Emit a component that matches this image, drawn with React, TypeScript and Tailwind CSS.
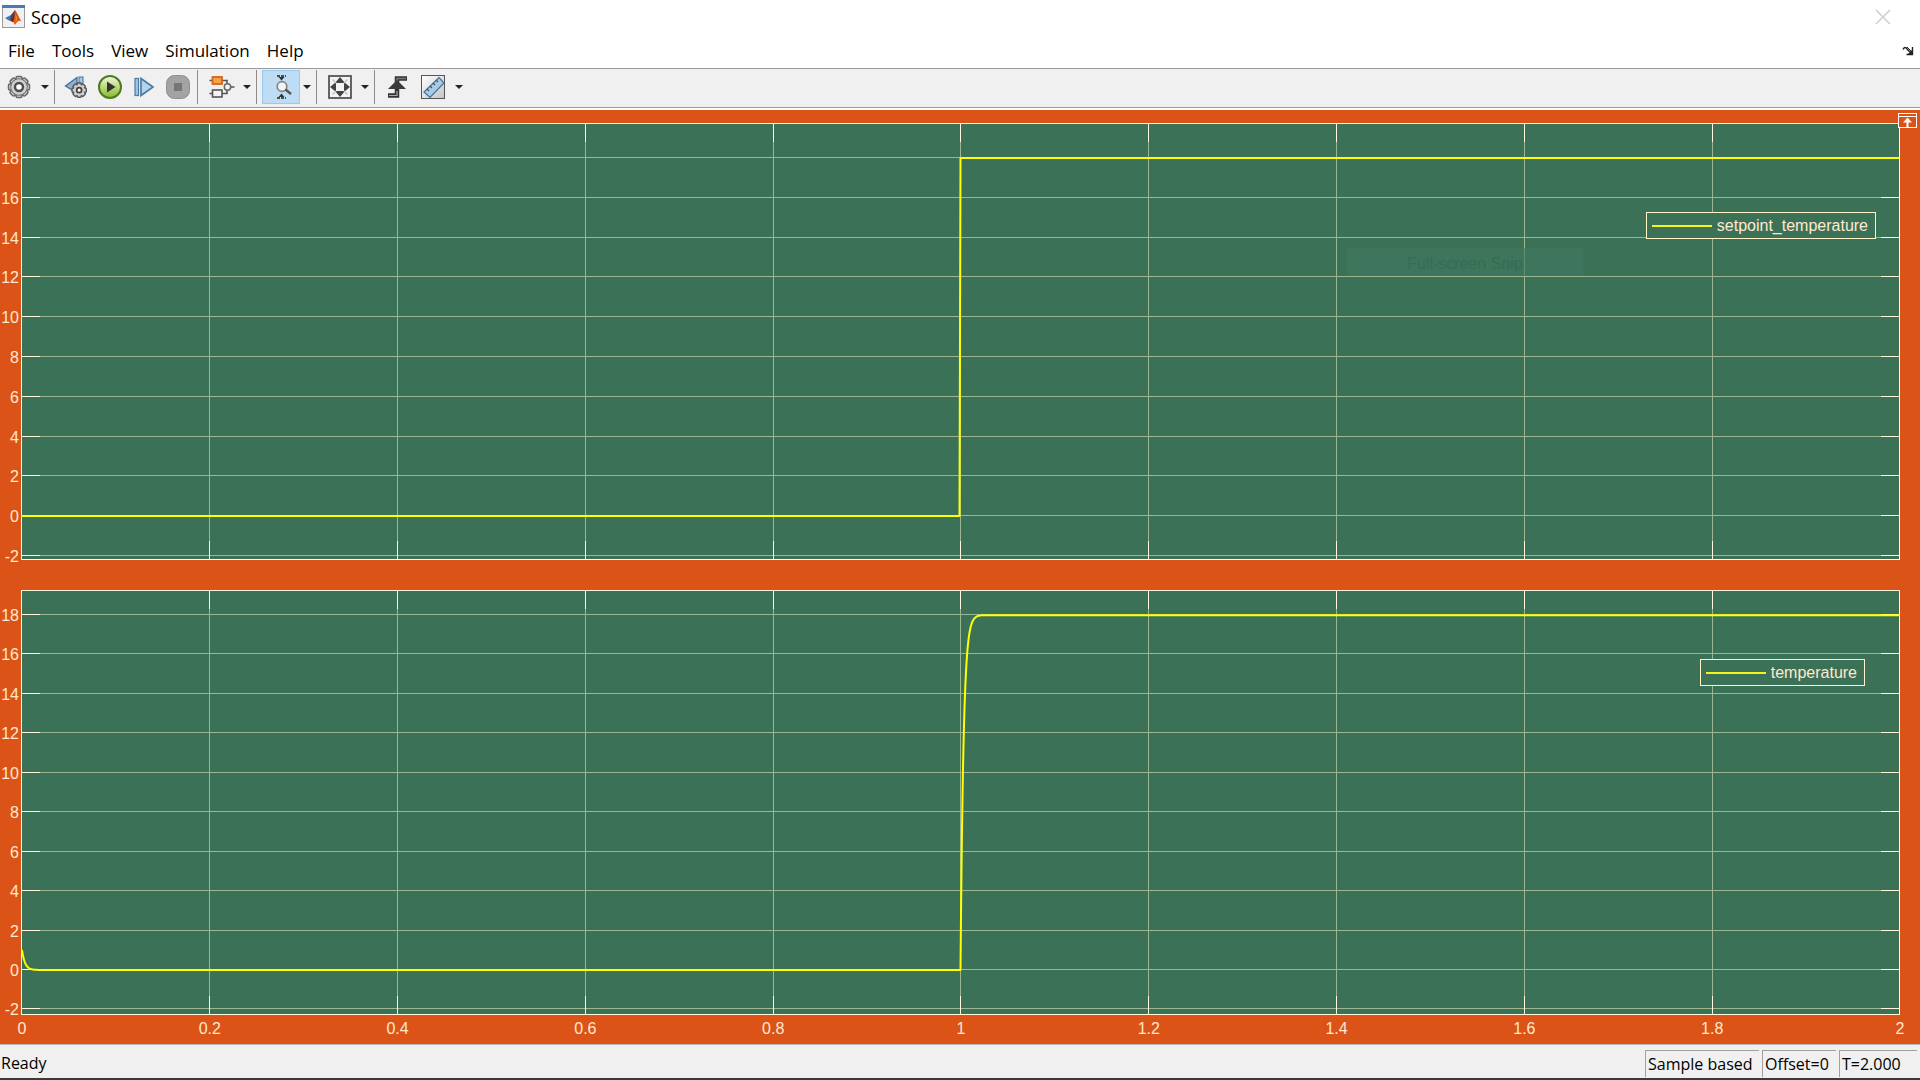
import React from "react";

const SIGNAL = "#ffff00";

/* ---------- icons ---------- */

function MatlabIcon() {
  return (
    <svg width="24" height="24" viewBox="0 0 24 24" aria-hidden="true">
      <rect x="0.5" y="0.5" width="22" height="22" fill="#f0f0f0" stroke="#9a9a9a" />
      <rect x="0" y="0" width="23" height="3" fill="#4a7ab0" />
      <path d="M3 13 L9 10 L12 12 L8 16 L6 15 Z" fill="#3f78b8" />
      <path d="M9 10 L13 5 L12 12 L8 16 Z" fill="#274a78" />
      <path d="M13 5 C15 7 17 13 20 17 C18 15 16 15 13 20 C12 17 10 16 8 16 C11 14 12 8 13 5 Z" fill="#d8541c" />
      <path d="M13 5 C12.500 9 12.500 13 11 17 C10 16 9 16 8 16 C11 14 12 8 13 5 Z" fill="#7c1f10" />
      <path d="M13.500 9 C15 12 15 15 13.500 18 C14 15 14 12 13.500 9 Z" fill="#f6b13c" />
    </svg>
  );
}

const GEAR_TEETH = [0, 45, 90, 135, 180, 225, 270, 315];

function GearIcon() {
  return (
    <svg width="24" height="24" viewBox="0 0 24 24" aria-hidden="true">
      <g fill="#d4d4d4" stroke="#666" strokeWidth="1.500">
        {GEAR_TEETH.map((a) => (
          <rect key={a} x="9" y="1.500" width="6" height="6" rx="1.500" transform={`rotate(${a} 12 12)`} />
        ))}
        <circle cx="12" cy="12" r="8" />
      </g>
      <circle cx="12" cy="12" r="7.800" fill="#d0d0d0" />
      <circle cx="12" cy="12" r="4" fill="#fff" stroke="#4c4c4c" strokeWidth="2.400" />
    </svg>
  );
}

function StepBackIcon() {
  return (
    <svg width="24" height="24" viewBox="0 0 24 24" aria-hidden="true">
      <path d="M13 2.500 V18 L1.500 11 Z" fill="#8fb0cf" stroke="#46709a" strokeWidth="1.300" />
      <rect x="15" y="2" width="4" height="14" fill="#a9c6e0" stroke="#46709a" />
      <g transform="translate(7 7) scale(0.68)" fill="#cfcfcf" stroke="#555" strokeWidth="2">
        {GEAR_TEETH.map((a) => (
          <rect key={a} x="9" y="1.500" width="6" height="6" rx="1" transform={`rotate(${a} 12 12)`} />
        ))}
        <circle cx="12" cy="12" r="8" stroke="none" />
        <circle cx="12" cy="12" r="3.600" fill="#fff" stroke="#444" strokeWidth="2.600" />
      </g>
    </svg>
  );
}

function RunIcon() {
  return (
    <svg width="26" height="26" viewBox="0 0 26 26" aria-hidden="true">
      <defs>
        <linearGradient id="run" x1="0" y1="0" x2="0" y2="1">
          <stop offset="0" stopColor="#f3f9e4" />
          <stop offset="0.550" stopColor="#b5d773" />
          <stop offset="1" stopColor="#86b933" />
        </linearGradient>
      </defs>
      <circle cx="13" cy="13" r="11" fill="url(#run)" stroke="#4d7a1e" strokeWidth="2" />
      <path d="M10 7.500 L18.500 13 L10 18.500 Z" fill="#333" />
    </svg>
  );
}

function StepForwardIcon() {
  return (
    <svg width="22" height="22" viewBox="0 0 22 22" aria-hidden="true">
      <rect x="2" y="2.500" width="3.500" height="17" fill="#a5c6e0" stroke="#4f7ba3" strokeWidth="1.200" />
      <path d="M8 2.500 V19.500 L20 11 Z" fill="#b5d3ea" stroke="#4f7ba3" strokeWidth="1.700" />
    </svg>
  );
}

function StopIcon() {
  return (
    <svg width="24" height="24" viewBox="0 0 24 24" aria-hidden="true">
      <rect x="0.500" y="0.500" width="23" height="23" rx="8" fill="#a3a3a3" stroke="#8e8e8e" />
      <rect x="8" y="8" width="8" height="8" fill="#767676" />
    </svg>
  );
}

function ModelIcon() {
  return (
    <svg width="26" height="24" viewBox="0 0 26 24" aria-hidden="true">
      <path
        d="M13 5.500 H18 V9 M13 18.500 H18 V15 M22 12 H25.500 M0.500 5.500 H3 M0.500 18.500 H3"
        fill="none"
        stroke="#555"
        strokeWidth="1.600"
      />
      <rect x="3.500" y="2" width="9.500" height="7" fill="#f6a24a" stroke="#d0681a" strokeWidth="1.800" />
      <rect x="3.500" y="15" width="9.500" height="7" fill="#f4f4f4" stroke="#555" strokeWidth="1.600" />
      <circle cx="18.500" cy="12" r="3.200" fill="#f4f4f4" stroke="#666" strokeWidth="1.500" />
    </svg>
  );
}

function ZoomYIcon() {
  return (
    <svg width="18" height="26" viewBox="0 0 18 26" aria-hidden="true">
      <path d="M3 2 H12 M3 24 H12" stroke="#222" strokeWidth="1.400" strokeDasharray="3 1" />
      <path d="M4.500 3 H10.500 L7.500 6.500 Z M4.500 23 L7.500 19.500 L10.500 23 Z" fill="#333" />
      <circle cx="8" cy="12.500" r="4.800" fill="#f2f4f6" stroke="#858585" strokeWidth="1.700" />
      <path d="M11.500 15.500 L17 20" stroke="#555" strokeWidth="2.400" />
    </svg>
  );
}

function FitIcon() {
  return (
    <svg width="24" height="24" viewBox="0 0 24 24" aria-hidden="true">
      <rect x="1" y="1" width="22" height="22" fill="#f3f3f3" stroke="#555" strokeWidth="1.800" />
      <path d="M12 2 L17 8 H7 Z M12 22 L17 16 H7 Z M2 12 L8 7 V17 Z M22 12 L16 7 V17 Z" fill="#444" />
      <path d="M4.500 4.500 L8 8 M19.500 4.500 L16 8 M4.500 19.500 L8 16 M19.500 19.500 L16 16" stroke="#c4c4c4" strokeWidth="1.500" />
    </svg>
  );
}

function TriggerIcon() {
  return (
    <svg width="22" height="24" viewBox="0 0 22 24" aria-hidden="true">
      <path d="M2 20.500 H11 V3.500 H21" fill="none" stroke="#333" strokeWidth="4.500" />
      <path d="M11 14 V3.500 H20" fill="none" stroke="#777" strokeWidth="1.500" />
      <path d="M3 20.500 H11 V16" fill="none" stroke="#aaa" strokeWidth="1.200" />
      <path d="M11 5 L20 14 H2 Z" fill="#3a3a3a" />
    </svg>
  );
}

function MeasureIcon() {
  return (
    <svg width="24" height="24" viewBox="0 0 24 24" aria-hidden="true">
      <defs>
        <linearGradient id="sheet" x1="0" y1="0" x2="1" y2="1">
          <stop offset="0" stopColor="#ffffff" />
          <stop offset="1" stopColor="#c4c4c4" />
        </linearGradient>
      </defs>
      <rect x="0.500" y="0.500" width="23" height="23" fill="url(#sheet)" stroke="#555" />
      <path d="M3 17 L18 2.500 L23 8 L9 22.500 Z" fill="#a9cbe6" stroke="#4a6f92" strokeWidth="1.200" />
      <path d="M6 14 L8 16 M9 11 L11 13 M12 8 L14 10 M15 5 L17 7" stroke="#2e5a82" strokeWidth="1.200" />
    </svg>
  );
}

function UndockIcon() {
  return (
    <svg width="12" height="10" viewBox="0 0 12 10" aria-hidden="true">
      <path d="M1 3.500 C2 1 4 1 5 3 L9 7 M10.500 1 V8.500 H4.500" fill="none" stroke="#222" strokeWidth="1.400" />
      <path d="M5 1 L9 5" stroke="#222" strokeWidth="1" />
      <path d="M10 8 V4 L6 8 Z" fill="#222" />
    </svg>
  );
}

function MaximizeAxesIcon() {
  return (
    <svg width="19" height="15" viewBox="0 0 19 15" aria-hidden="true">
      <rect x="0.500" y="0.500" width="18" height="14" fill="#d95319" stroke="#fff" />
      <path d="M1 3.500 H18" stroke="#fff" />
      <path d="M9.500 4.500 L14 9.500 H10.500 V14 H8.500 V9.500 H5 Z" fill="#fff" />
    </svg>
  );
}

/* ---------- toolbar pieces ---------- */

function ToolButton({
  label,
  className = "w-[34px]",
  children,
}: {
  label: string;
  className?: string;
  children: React.ReactNode;
}) {
  return (
    <button type="button" aria-label={label} className={`flex h-[34px] items-center justify-center ${className}`}>
      {children}
    </button>
  );
}

function DropArrow({ label }: { label: string }) {
  return (
    <button type="button" aria-label={label} className="flex h-[34px] w-[14px] items-center justify-center">
      <svg width="8" height="4" viewBox="0 0 8 4" aria-hidden="true">
        <path d="M0 0 H8 L4 4 Z" fill="#222" />
      </svg>
    </button>
  );
}

function Separator({ className = "mr-[5px]" }: { className?: string }) {
  return <span className={`ml-[2px] h-[34px] w-px bg-[#8c8c8c] ${className}`} />;
}

/* ---------- plots ---------- */

interface Range {
  height: number;
  max: number;
  perUnit: number;
}

const PLOT_WIDTH = 1879;
const TICK = 19;
const Y_TICKS = [18, 16, 14, 12, 10, 8, 6, 4, 2, 0, -2];
const X_TICKS = [0, 0.2, 0.4, 0.6, 0.8, 1, 1.2, 1.4, 1.6, 1.8, 2];

const UPPER: Range = { height: 437, max: 34, perUnit: 19.9 };
const LOWER: Range = { height: 425, max: 24, perUnit: 19.72 };

const toX = (t: number) => Math.ceil((t / 2) * (PLOT_WIDTH - 1)) + 0.5;
const toY = (v: number, r: Range) => Math.round(r.max + (18 - v) * r.perUnit) + 0.5;

function Plot({ range, path, children }: { range: Range; path: string; children: React.ReactNode }) {
  const h = range.height;
  return (
    <div className="relative min-w-0 flex-1">
      <svg
        className="absolute inset-0 h-full w-full"
        viewBox={`0 0 ${PLOT_WIDTH} ${h}`}
        preserveAspectRatio="none"
        role="img"
        aria-label="Signal plot"
      >
        <rect width={PLOT_WIDTH} height={h} fill="#3b7257" />
        <g stroke="#9bb792" shapeRendering="crispEdges">
          {Y_TICKS.map((v) => (
            <line key={v} x1="0" x2={PLOT_WIDTH} y1={toY(v, range)} y2={toY(v, range)} />
          ))}
          {X_TICKS.slice(1, -1).map((t) => (
            <line key={t} x1={toX(t)} x2={toX(t)} y1="0" y2={h} />
          ))}
        </g>
        <g stroke="#fff8dc" fill="none" shapeRendering="crispEdges">
          {Y_TICKS.map((v) => {
            const y = toY(v, range);
            return <path key={v} d={`M0 ${y} H${TICK} M${PLOT_WIDTH - TICK} ${y} H${PLOT_WIDTH}`} />;
          })}
          {X_TICKS.slice(1, -1).map((t) => (
            <path key={t} d={`M${toX(t)} 0 V${TICK} M${toX(t)} ${h - TICK} V${h}`} />
          ))}
          <rect x="0.5" y="0.5" width={PLOT_WIDTH - 1} height={h - 1} />
        </g>
        <path d={path} fill="none" stroke={SIGNAL} strokeWidth="2" strokeLinejoin="round" />
      </svg>
      {children}
    </div>
  );
}

function YLabels({ range }: { range: Range }) {
  return (
    <div className="relative w-[21px] shrink-0">
      {Y_TICKS.map((v) => (
        <span
          key={v}
          className="absolute right-[2px] -mt-[8px] leading-[18px]"
          style={{ top: `${((toY(v, range) + 0.5) / range.height) * 100}%` }}
        >
          {v}
        </span>
      ))}
    </div>
  );
}

function Legend({ label, className }: { label: string; className: string }) {
  return (
    <div className={`absolute flex h-[27px] items-center gap-[5px] border border-[#fff3c8] bg-[#3b7257] pl-[5px] pr-[7px] ${className}`}>
      <span className="h-[2px] w-[60px] bg-[#f4f41c]" />
      <span className="pt-px leading-[20px]">{label}</span>
    </div>
  );
}

const X1 = toX(1);

const u18 = toY(18, UPPER) + 0.5;
const u0 = toY(0, UPPER) + 0.5;
const UPPER_PATH = `M0 ${u0} H${X1 - 1} L${X1} ${u18} H${PLOT_WIDTH}`;

/* First-order response: v = end + (start - end) * exp(-dx / tau) */
const l18 = toY(18, LOWER) + 0.5;
const l0 = toY(0, LOWER) + 0.5;
const decay = (x0: number, from: number, to: number, tau: number, span: number) =>
  Array.from({ length: span * 2 + 1 }, (_, i) => {
    const dx = i / 2;
    return `L${x0 + dx} ${(to + (from - to) * Math.exp(-dx / tau)).toFixed(2)}`;
  }).join(" ");
const LOWER_PATH = `M1 ${l0 - 20} ${decay(1, l0 - 20, l0, 3, 18)} H${X1} ${decay(X1, l0, l18, 3, 22)} H${PLOT_WIDTH}`;

/* ---------- page ---------- */

const MENUS = ["File", "Tools", "View", "Simulation", "Help"];

function StatusCell({ className, children }: { className: string; children: React.ReactNode }) {
  return (
    <span className={`h-[27px] border-l border-t border-[#a0a0a0] pl-[2px] leading-[26px] ${className}`}>{children}</span>
  );
}

export default function App() {
  return (
    <div className="flex min-h-screen flex-col bg-white font-['Open_Sans',sans-serif] text-[16px] text-black">
      <header className="flex h-[34px] items-center pl-[2px]">
        <MatlabIcon />
        <h1 className="ml-[5px] text-[18px] leading-[24px]">Scope</h1>
        <button type="button" aria-label="Close" className="ml-auto mr-[28px] p-px">
          <svg width="16" height="16" viewBox="0 0 16 16" aria-hidden="true">
            <path d="M1 1 L15 15 M15 1 L1 15" stroke="#cfcfcf" strokeWidth="1.600" />
          </svg>
        </button>
      </header>

      <nav className="flex h-[34px] items-center gap-[17px] pl-[8px] pr-[6px]">
        {MENUS.map((m) => (
          <button key={m} type="button" className="text-[17px] leading-[24px]">
            {m}
          </button>
        ))}
        <button type="button" aria-label="Dock window" className="ml-auto">
          <UndockIcon />
        </button>
      </nav>

      <div
        role="toolbar"
        aria-label="Scope tools"
        className="flex h-[40px] items-center border-y border-[#9a9a9a] bg-[#f0f0f0] pb-[2px]"
      >
        <ToolButton label="Configuration properties" className="w-[38px]">
          <GearIcon />
        </ToolButton>
        <DropArrow label="Configuration options" />
        <Separator className="mr-[4px]" />
        <ToolButton label="Stepping options">
          <StepBackIcon />
        </ToolButton>
        <ToolButton label="Run">
          <RunIcon />
        </ToolButton>
        <ToolButton label="Step forward">
          <StepForwardIcon />
        </ToolButton>
        <ToolButton label="Stop">
          <StopIcon />
        </ToolButton>
        <Separator />
        <ToolButton label="Highlight block" className="w-[37px]">
          <ModelIcon />
        </ToolButton>
        <DropArrow label="Highlight options" />
        <Separator />
        <ToolButton label="Zoom Y" className="w-[38px] border border-[#99c9ef] bg-[#bfdcf5] pl-[4px]">
          <ZoomYIcon />
        </ToolButton>
        <DropArrow label="Zoom options" />
        <Separator />
        <ToolButton label="Scale axes" className="w-[36px]">
          <FitIcon />
        </ToolButton>
        <DropArrow label="Scale options" />
        <Separator />
        <ToolButton label="Triggers">
          <TriggerIcon />
        </ToolButton>
        <ToolButton label="Cursor measurements" className="w-[38px]">
          <MeasureIcon />
        </ToolButton>
        <DropArrow label="Measurement options" />
      </div>

      <main className="relative mt-[2px] flex flex-1 flex-col bg-[#dc5317] pt-[13px] font-['Liberation_Sans',Arial,sans-serif] text-[#ffe9d0]">
        <section className="flex min-h-[200px] flex-[437] pr-[20px]">
          <YLabels range={UPPER} />
          <Plot range={UPPER} path={UPPER_PATH}>
            <Legend label="setpoint_temperature" className="right-[24px] top-[89px]" />
            <div className="absolute right-[317px] top-[125px] h-[28px] w-[236px] bg-[#3f7860]/60 text-center leading-[32px] text-[#366d53]">
              Full-screen Snip
            </div>
          </Plot>
        </section>
        <div className="h-[30px] shrink-0" />
        <section className="flex min-h-[200px] flex-[425] pr-[20px]">
          <YLabels range={LOWER} />
          <Plot range={LOWER} path={LOWER_PATH}>
            <Legend label="temperature" className="right-[35px] top-[69px]" />
          </Plot>
        </section>
        <div className="relative ml-[22px] mr-[20px] h-[29px] shrink-0">
          {X_TICKS.map((t) => (
            <span
              key={t}
              className="absolute top-[5px] -translate-x-1/2 leading-[18px]"
              style={{ left: `${t * 50}%` }}
            >
              {t}
            </span>
          ))}
        </div>
        <button type="button" aria-label="Maximize axes" className="absolute right-[3px] top-[3px]">
          <MaximizeAxesIcon />
        </button>
      </main>

      <footer className="flex h-[36px] items-end justify-between border-b-2 border-t border-b-[#3a3a3a] border-t-[#b8b8b8] bg-[#f0f0f0] pb-px pl-px">
        <span className="leading-[28px]">Ready</span>
        <div className="flex gap-[3px] pr-[3px]">
          <StatusCell className="w-[114px]">Sample based</StatusCell>
          <StatusCell className="w-[74px]">Offset=0</StatusCell>
          <StatusCell className="w-[78px]">T=2.000</StatusCell>
        </div>
      </footer>
    </div>
  );
}
